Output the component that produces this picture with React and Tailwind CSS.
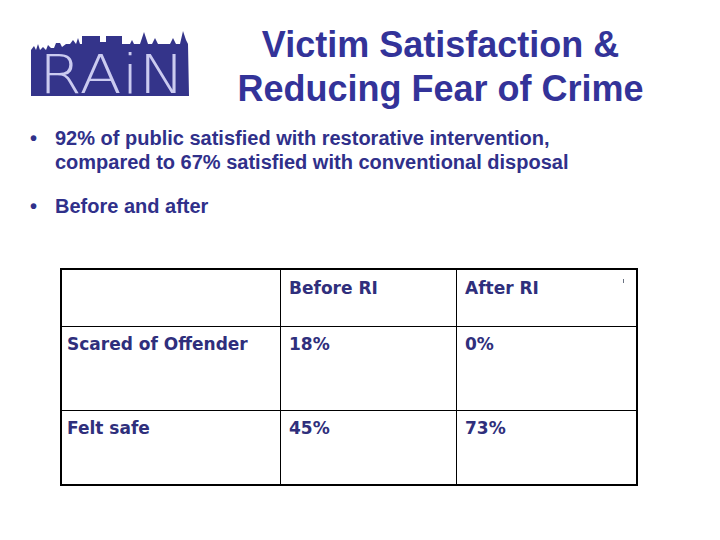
import React from 'react';

const Logo = () => (
  <svg width="170" height="85" viewBox="25 25 170 85" className="block overflow-visible">
    <polygon
      fill="#34348a"
      points="31,96 31,50 34,46 36,50 38,44 40,50 43,47 46,50 48,45 51,48 54,48 56,43 60,43 62,47 66,44 70,44 73,40 76,44 78,38 80,44 82,44 82,36 100,36 100,42 106,42 106,36 122,36 122,44 130,44 132,40 134,44 140,44 144,32 148,44 152,44 155,38 158,44 170,44 173,38 176,44 180,44 183,31 186,40 188,44 189,96"
    />
    <text
      x="39"
      y="93"
      fill="#cbcbf0"
      fontFamily="'DejaVu Sans', sans-serif"
      fontWeight="200"
      fontSize="54"
      textLength="146"
      lengthAdjust="spacingAndGlyphs"
    >
      RAiN
    </text>
  </svg>
);

const rows = [
  ['Scared of Offender', '18%', '0%'],
  ['Felt safe', '45%', '73%'],
];

export default function App() {
  return (
    <div className="relative w-[720px] h-[540px] bg-white overflow-hidden font-['Liberation_Sans',Arial,sans-serif]">
      {/* Header */}
      <div className="flex h-[126px]">
        <div className="pl-[25px] pt-[25px]">
          <Logo />
        </div>
        <h1 className="flex-1 pr-[34px] pt-[23px] text-center text-[36px] leading-[44px] font-bold text-[#333399]">
          Victim Satisfaction &amp;
          <br />
          Reducing Fear of Crime
        </h1>
      </div>

      {/* Bullets */}
      <ul className="text-[20px] leading-[24px] font-bold text-[#30308a]">
        <li className="flex">
          <span className="w-[55px] pl-[30px]">•</span>
          <span>
            92% of public satisfied with restorative intervention,
            <br />
            compared to 67% satisfied with conventional disposal
          </span>
        </li>
        <li className="flex mt-[20px]">
          <span className="w-[55px] pl-[30px]">•</span>
          <span>Before and after</span>
        </li>
      </ul>

      {/* Table */}
      <div className="relative ml-[60px] mt-[50px] w-[578px] border-2 border-black font-['DejaVu_Sans',sans-serif] text-[17px] font-bold text-[#2f2f7c]">
        <div className="grid grid-cols-[218px_176px_180px] h-[56px]">
          <div />
          <div className="border-l border-black pl-[8px] pt-[6px]">Before RI</div>
          <div className="border-l border-black pl-[8px] pt-[6px]">After RI</div>
        </div>
        {rows.map((r, i) => (
          <div
            key={r[0]}
            className={`grid grid-cols-[218px_176px_180px] border-t border-black ${i === 0 ? 'h-[84px]' : 'h-[74px]'}`}
          >
            <div className="pl-[5px] pt-[5px]">{r[0]}</div>
            <div className="border-l border-black pl-[8px] pt-[5px]">{r[1]}</div>
            <div className="border-l border-black pl-[8px] pt-[5px]">{r[2]}</div>
          </div>
        ))}
        <span className="absolute left-[561px] top-[9px] w-px h-[4px] bg-gray-500" />
      </div>
    </div>
  );
}
